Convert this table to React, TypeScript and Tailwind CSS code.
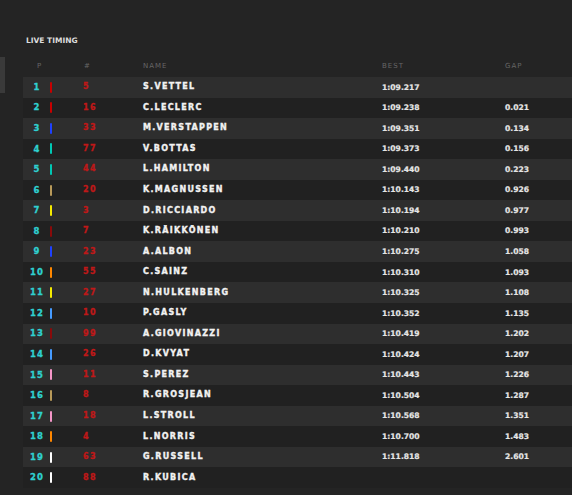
import React from "react";

type Row = { p: number; c: string; n: number; name: string; best: string; gap: string };

const rows: Row[] = [
  { p: 1, c: "#c80000", n: 5, name: "S.VETTEL", best: "1:09.217", gap: "" },
  { p: 2, c: "#c80000", n: 16, name: "C.LECLERC", best: "1:09.238", gap: "0.021" },
  { p: 3, c: "#1e41ff", n: 33, name: "M.VERSTAPPEN", best: "1:09.351", gap: "0.134" },
  { p: 4, c: "#00c8b4", n: 77, name: "V.BOTTAS", best: "1:09.373", gap: "0.156" },
  { p: 5, c: "#00c8b4", n: 44, name: "L.HAMILTON", best: "1:09.440", gap: "0.223" },
  { p: 6, c: "#b89a5a", n: 20, name: "K.MAGNUSSEN", best: "1:10.143", gap: "0.926" },
  { p: 7, c: "#f5ea00", n: 3, name: "D.RICCIARDO", best: "1:10.194", gap: "0.977" },
  { p: 8, c: "#8a0a0a", n: 7, name: "K.RÄIKKÖNEN", best: "1:10.210", gap: "0.993" },
  { p: 9, c: "#1e41ff", n: 23, name: "A.ALBON", best: "1:10.275", gap: "1.058" },
  { p: 10, c: "#ff8700", n: 55, name: "C.SAINZ", best: "1:10.310", gap: "1.093" },
  { p: 11, c: "#f5ea00", n: 27, name: "N.HULKENBERG", best: "1:10.325", gap: "1.108" },
  { p: 12, c: "#469bff", n: 10, name: "P.GASLY", best: "1:10.352", gap: "1.135" },
  { p: 13, c: "#8a0a0a", n: 99, name: "A.GIOVINAZZI", best: "1:10.419", gap: "1.202" },
  { p: 14, c: "#469bff", n: 26, name: "D.KVYAT", best: "1:10.424", gap: "1.207" },
  { p: 15, c: "#f596c8", n: 11, name: "S.PEREZ", best: "1:10.443", gap: "1.226" },
  { p: 16, c: "#b89a5a", n: 8, name: "R.GROSJEAN", best: "1:10.504", gap: "1.287" },
  { p: 17, c: "#f596c8", n: 18, name: "L.STROLL", best: "1:10.568", gap: "1.351" },
  { p: 18, c: "#ff8700", n: 4, name: "L.NORRIS", best: "1:10.700", gap: "1.483" },
  { p: 19, c: "#ffffff", n: 63, name: "G.RUSSELL", best: "1:11.818", gap: "2.601" },
  { p: 20, c: "#ffffff", n: 88, name: "R.KUBICA", best: "", gap: "" },
];

const grid = "grid grid-cols-[27px_33px_60px_239px_123px_1fr] items-center";

export default function App() {
  return (
    <div
      className="w-[572px] h-[495px] bg-[#242424] flex overflow-hidden"
      style={{ fontFamily: '"DejaVu Sans", sans-serif' }}
    >
      <div className="w-[5px] h-[36px] mt-[57px] bg-[#3a3a3a] shrink-0" />
      <div className="flex-1 pl-[18px] pt-[36px]">
        <div className="h-[10px] leading-[10px] pl-[3px] text-[7.5px] font-bold text-[#dcdcdc]">
          LIVE TIMING
        </div>
        <div className={`${grid} h-[11px] mt-[15px] mb-[5px] text-[7px] leading-[11px] tracking-[1px] text-[#666666]`}>
          <div className="text-center pl-[6px]">P</div>
          <div />
          <div className="pl-[1px]">#</div>
          <div>NAME</div>
          <div>BEST</div>
          <div>GAP</div>
        </div>
        {rows.map((r, i) => (
          <div
            key={r.p}
            className={`${grid} h-[20.56px] ${i % 2 === 0 ? "bg-[#2e2e2e]" : "bg-[#212121]"}`}
          >
            <div className="text-center pl-[1px] text-[8.5px] font-bold tracking-[1.2px] text-[#2fd0d0] [-webkit-text-stroke:0.3px_#2fd0d0]">
              {r.p}
            </div>
            <div className="flex items-center">
              <div className="w-[2px] h-[11px] rounded-[1px]" style={{ backgroundColor: r.c }} />
            </div>
            <div className="text-[8px] font-bold tracking-[1.5px] text-[#c01818] [-webkit-text-stroke:0.3px_#c01818]">
              {r.n}
            </div>
            <div className="text-[8px] font-bold tracking-[1.3px] text-[#f2f2f2] [-webkit-text-stroke:0.35px_#f2f2f2]">
              {r.name}
            </div>
            <div className="text-[7.6px] font-bold text-[#e6e6e6] [-webkit-text-stroke:0.2px_#e6e6e6]">{r.best}</div>
            <div className="text-[7.6px] font-bold text-[#e6e6e6] [-webkit-text-stroke:0.2px_#e6e6e6]">{r.gap}</div>
          </div>
        ))}
      </div>
    </div>
  );
}
